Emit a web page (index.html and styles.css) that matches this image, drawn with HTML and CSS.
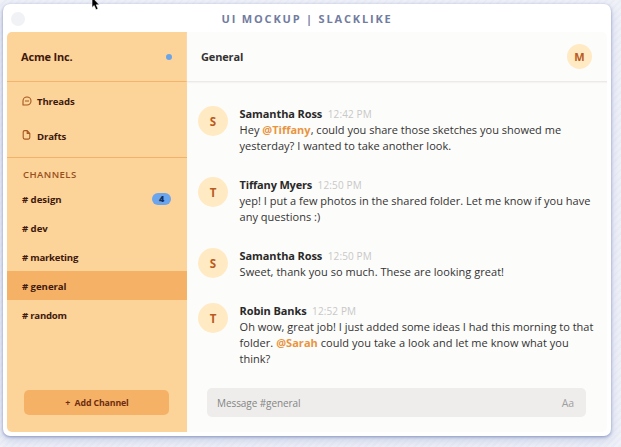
FILE: index.html
```html
<!DOCTYPE html>
<html lang="en">
<head>
<meta charset="utf-8">
<title>UI Mockup | Slacklike</title>
<link rel="stylesheet" href="styles.css">
</head>
<body>
<div class="window">
  <div class="titlebar"><span class="window-dot"></span><span class="window-title">UI MOCKUP | SLACKLIKE</span></div>
  <div class="app">
    <aside class="sidebar">
      <header class="workspace"><span class="workspace-name">Acme Inc.</span><span class="status"></span></header>
      <nav class="shortcuts">
        <div class="shortcut"><svg viewBox="0 0 10 10"><path d="M1 9V5a4 4 0 1 1 4 4ZM3 5h4"/></svg><span>Threads</span></div>
        <div class="shortcut"><svg class="file" viewBox="0 0 10 10"><path d="M5.2.6H2.7Q1.2.6 1.2 2.1v5.5q0 1.5 1.5 1.5h3.6q1.5 0 1.5-1.5V3.4ZM5.2.6v2.8h2.6"/></svg><span>Drafts</span></div>
      </nav>
      <h2 class="channels-title">CHANNELS</h2>
      <ul class="channels">
        <li><span># design</span><b class="badge">4</b></li>
        <li><span># dev</span></li>
        <li><span class="tight"># marketing</span></li>
        <li class="active"><span># general</span></li>
        <li><span class="tight"># random</span></li>
      </ul>
      <button class="add">+&nbsp; Add Channel</button>
    </aside>
    <main class="chat">
      <header class="chat-header"><h1>General</h1><span class="avatar me">M</span></header>
      <section class="messages">
        <article class="message"><span class="avatar">S</span><div class="body">
          <div class="meta"><strong>Samantha Ross</strong><time>12:42 PM</time></div>
          <p>Hey <a>@Tiffany</a>, could you share those sketches you showed me<br>yesterday? I wanted to take another look.</p></div></article>
        <article class="message"><span class="avatar">T</span><div class="body">
          <div class="meta"><strong class="tight">Tiffany Myers</strong><time>12:50 PM</time></div>
          <p>yep! I put a few photos in the shared folder. Let me know if you have<br>any questions :)</p></div></article>
        <article class="message"><span class="avatar">S</span><div class="body">
          <div class="meta"><strong>Samantha Ross</strong><time>12:50 PM</time></div>
          <p class="loose">Sweet, thank you so much. These are looking great!</p></div></article>
        <article class="message"><span class="avatar">T</span><div class="body">
          <div class="meta"><strong>Robin Banks</strong><time>12:52 PM</time></div>
          <p>Oh wow, great job! I just added some ideas I had this morning to that<br><span class="loose">folder. <a>@Sarah</a> could you take a look and let me know what you</span><br>think?</p></div></article>
      </section>
      <div class="composer"><span class="placeholder">Message #general</span><span class="format">Aa</span></div>
    </main>
  </div>
</div>
<svg class="cursor" viewBox="0 0 10 15"><path d="M1 0v10.5l2.2-2 1.8 4.2 2-.9-1.8-4H8.3Z"/></svg>
</body>
</html>
```
FILE: styles.css
```css
* { box-sizing: border-box; }
body { margin: 0; height: 447px; padding: 4px 10px 11px 3px; overflow: hidden; font-family: "Open Sans", "Noto Sans", sans-serif; font-size: 11px; color: #333; background: repeating-linear-gradient(135deg, #f0f1f8 0 3px, #ebedf5 3px 5px); }
.window { height: 432px; padding: 0 4px 4px; background: #fff; border-radius: 7px; box-shadow: 0 1px 3px #8b97c2, 0 4px 11px #c4cee6; }
.titlebar { height: 28px; padding-top: 1px; display: flex; align-items: center; justify-content: center; position: relative; }
.window-dot { position: absolute; left: 4px; top: 8px; width: 14px; height: 14px; border-radius: 50%; background: #f1f2f6; }
.window-title { font-size: 11px; font-weight: 700; letter-spacing: 1.82px; color: #727c9f; }
.app { display: flex; height: 400px; border-radius: 5px; overflow: hidden; background: #fcfcfa; }
.sidebar { width: 180px; display: flex; flex-direction: column; background: #fcd398; color: #40190d; font-weight: 700; }
.workspace { height: 50px; padding: 0 15px 0 14px; display: flex; align-items: center; justify-content: space-between; border-bottom: 1px solid #f3b46b; letter-spacing: -.17px; }
.status { width: 6px; height: 6px; border-radius: 50%; background: #6ba5e8; }
.shortcuts { height: 76px; padding-top: 2px; border-bottom: 1px solid #f1b36c; font-size: 9.6px; letter-spacing: -.13px; }
.shortcut { height: 35px; padding-left: 15px; display: flex; align-items: center; gap: 5px; }
.shortcut svg { width: 10px; height: 10px; margin-top: -1px; fill: none; stroke: #a5571f; stroke-width: 1.1; stroke-linejoin: round; }
.shortcut .file { margin-top: -3px; }
.channels-title { margin: 0; height: 26px; padding: 10px 0 0 16px; font-size: 9.5px; line-height: 14px; font-weight: 600; color: #97501d; letter-spacing: .45px; }
.channels { list-style: none; margin: 0; padding: 0; font-size: 9.6px; letter-spacing: -.04px; }
.channels li { height: 29px; padding: 1px 16px 0 15px; display: flex; align-items: center; justify-content: space-between; }
.channels .active { background: #f5b267; }
.channels .tight { letter-spacing: -.24px; }
.badge { width: 19px; height: 12px; line-height: 12px; border-radius: 6px; background: #6ba5ee; color: #15305c; text-align: center; font-size: 9px; }
.add { margin: auto 18px 17px 17px; height: 25px; padding: 1px 0 0 1px; border: 0; border-radius: 5px; background: #f5b267; color: #6f2c10; font: 700 8.8px "Open Sans", sans-serif; letter-spacing: -.14px; }
.chat { flex: 1; display: flex; flex-direction: column; }
.chat-header { height: 50px; padding: 0 15px 0 14px; display: flex; align-items: center; justify-content: space-between; border-bottom: 1px solid #eceae8; box-shadow: 0 1px 1px #f5f4f2; }
.chat-header h1 { margin: 0; font-size: 11px; letter-spacing: -.15px; color: #333; }
.avatar { flex: none; display: grid; place-items: center; width: 30px; height: 30px; border-radius: 50%; background: #ffeac4; color: #b95a20; font-weight: 700; font-size: 11.5px; }
.me { width: 25px; height: 25px; font-size: 11px; }
.messages { padding: 24px 0 0 11px; flex: 1; display: flex; flex-direction: column; gap: 23px; }
.message { display: flex; gap: 11.6px; }
.body { line-height: 16px; white-space: nowrap; }
.meta { height: 16px; display: flex; gap: 5.5px; }
.meta strong { color: #292929; letter-spacing: -.1px; }
.meta .tight { letter-spacing: -.18px; }
.meta time { color: #c8c8c8; font-size: 10px; letter-spacing: .14px; }
.message p { margin: 0; letter-spacing: .01px; }
.message .loose { letter-spacing: .04px; }
.message a { color: #e9943f; font-weight: 700; }
.composer { margin: 0 21px 15px 20px; height: 29px; padding: 0 12px 0 10px; border-radius: 5px; background: #eeedeb; display: flex; align-items: center; justify-content: space-between; color: #858585; font-size: 10px; letter-spacing: -.08px; }
.format { color: #a0a0a0; font-size: 10.5px; }
.cursor { position: absolute; left: 91px; top: -3px; width: 10px; height: 15px; fill: #000; stroke: #fff; stroke-width: .6; }
```
